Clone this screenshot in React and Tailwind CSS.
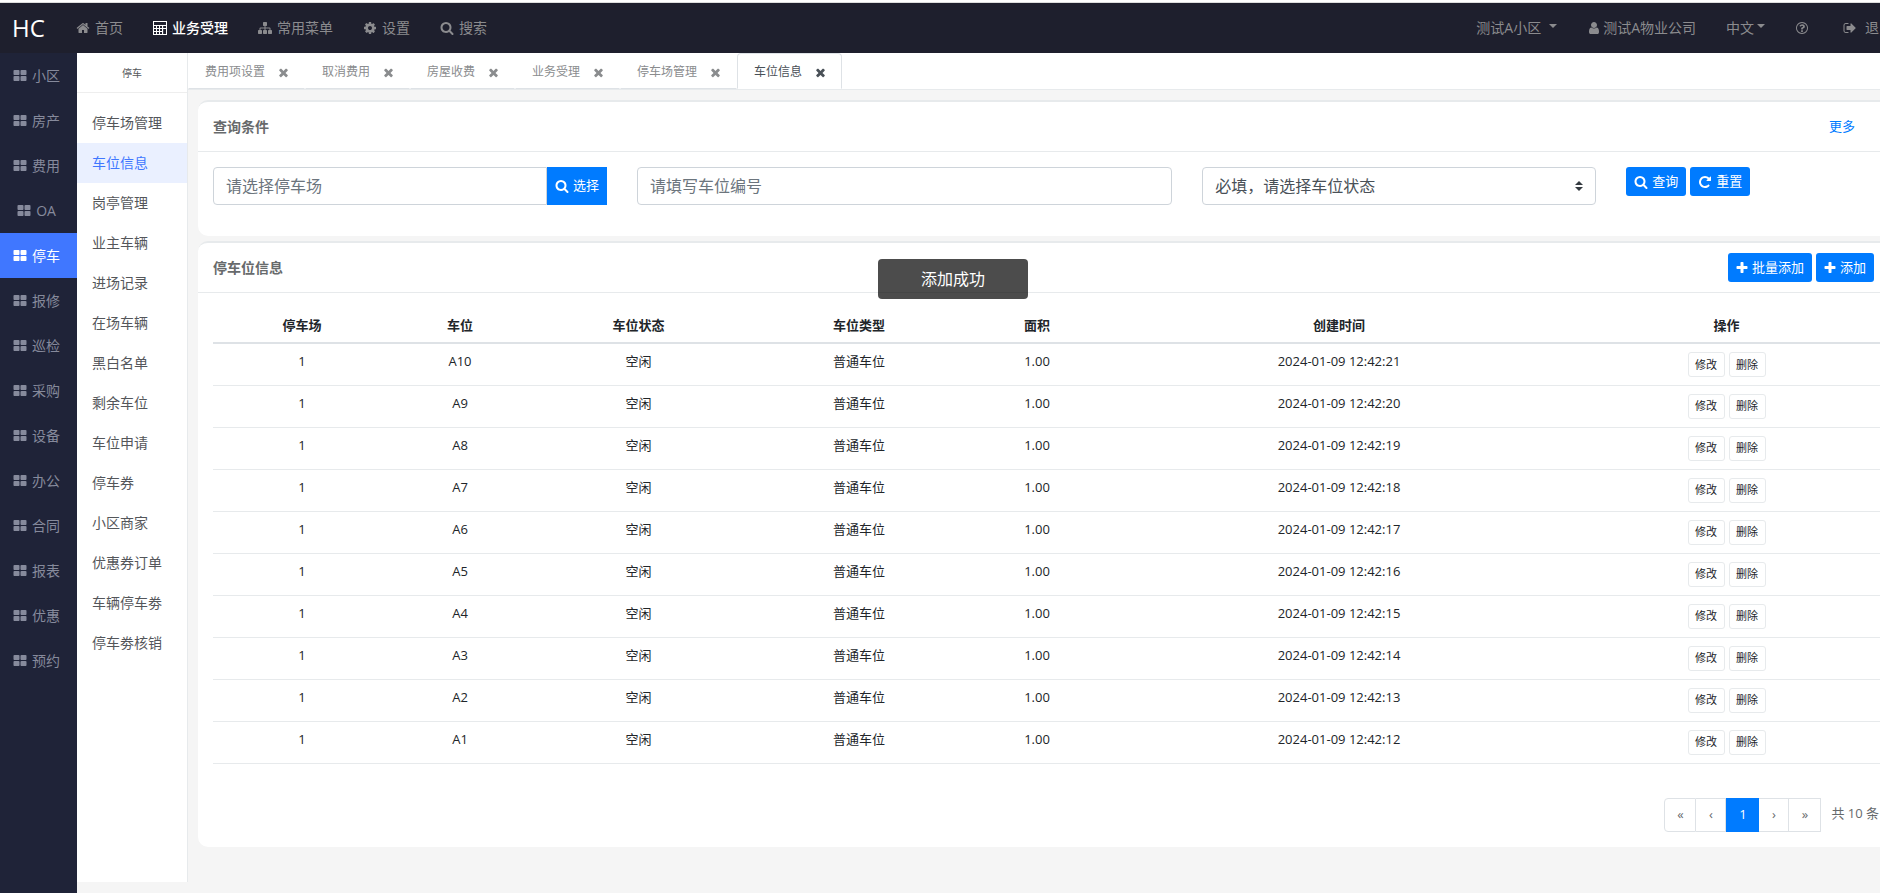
import { useState } from "react";
import clsx from "clsx";

const ICONS = {
    home: "M1472 992v480q0 26-19 45t-45 19h-384v-384h-256v384h-384q-26 0-45-19t-19-45v-480q0-1 .5-3t.5-3l575-474 575 474q1 2 1 6zm223-69l-62 74q-8 9-21 11h-3q-13 0-21-7l-692-577-692 577q-12 8-24 7-13-2-21-11l-62-74q-8-10-7-23.5t11-21.5l719-599q32-26 76-26t76 26l244 204v-195q0-14 9-23t23-9h192q14 0 23 9t9 23v408l219 182q10 8 11 21.5t-7 23.5z",
    calculator: "M0 0h1792v1792h-1792zM130 130v384h1532v-384zM130 640v256h256v-256zM514 640v256h256v-256zM898 640v256h256v-256zM1300 640v256h362v-256zM130 1024v256h256v-256zM514 1024v256h256v-256zM898 1024v256h256v-256zM130 1408v254h256v-254zM514 1408v254h256v-254zM898 1408v254h256v-254zM1300 1024v638h362v-638z",
    sitemap: "M1792 1248v320q0 40-28 68t-68 28h-320q-40 0-68-28t-28-68v-320q0-40 28-68t68-28h96v-192h-512v192h96q40 0 68 28t28 68v320q0 40-28 68t-68 28h-320q-40 0-68-28t-28-68v-320q0-40 28-68t68-28h96v-192h-512v192h96q40 0 68 28t28 68v320q0 40-28 68t-68 28h-320q-40 0-68-28t-28-68v-320q0-40 28-68t68-28h96v-192q0-52 38-90t90-38h512v-192h-96q-40 0-68-28t-28-68v-320q0-40 28-68t68-28h320q40 0 68 28t28 68v320q0 40-28 68t-68 28h-96v192h512q52 0 90 38t38 90v192h96q40 0 68 28t28 68z",
    cog: "M1152 896q0-106-75-181t-181-75-181 75-75 181 75 181 181 75 181-75 75-181zm512-109v222q0 12-8 23t-20 13l-185 28q-19 54-39 91 35 50 107 138 10 12 10 25t-9 23q-27 37-99 108t-94 71q-12 0-26-9l-138-108q-44 23-91 38-16 136-29 186-7 28-36 28h-222q-14 0-24.5-8.5t-11.5-21.5l-28-184q-49-16-90-37l-141 107q-10 9-25 9-14 0-25-11-126-114-165-168-7-10-7-23 0-12 8-23 15-21 51-66.5t54-70.5q-27-50-41-99l-183-27q-13-2-21-12.5t-8-23.5v-222q0-12 8-23t19-13l186-28q14-46 39-92-40-57-107-138-10-12-10-24 0-10 9-23 26-36 98.5-107.5t94.5-71.5q13 0 26 10l138 107q44-23 91-38 16-136 29-186 7-28 36-28h222q14 0 24.5 8.5t11.5 21.5l28 184q49 16 90 37l142-107q9-9 24-9 13 0 25 10 129 119 165 170 7 8 7 22 0 12-8 23-15 21-51 66.5t-54 70.5q26 50 41 98l183 28q13 2 21 12.5t8 23.5z",
    search: "M1216 832q0-185-131.5-316.5t-316.5-131.5-316.5 131.5-131.5 316.5 131.5 316.5 316.5 131.5 316.5-131.5 131.5-316.5zm512 832q0 52-38 90t-90 38q-54 0-90-38l-343-342q-179 124-399 124-143 0-273.5-55.5t-225-150-150-225-55.5-273.5 55.5-273.5 150-225 225-150 273.5-55.5 273.5 55.5 225 150 150 225 55.5 273.5q0 220-124 399l343 343q37 37 37 90z",
    times: "M1490 1322q0 40-28 68l-136 136q-28 28-68 28t-68-28l-294-294-294 294q-28 28-68 28t-68-28l-136-136q-28-28-28-68t28-68l294-294-294-294q-28-28-28-68t28-68l136-136q28-28 68-28t68 28l294 294 294-294q28-28 68-28t68 28l136 136q28 28 28 68t-28 68l-294 294 294 294q28 28 28 68z",
    plus: "M1600 736v192q0 40-28 68t-68 28h-416v416q0 40-28 68t-68 28h-192q-40 0-68-28t-28-68v-416h-416q-40 0-68-28t-28-68v-192q0-40 28-68t68-28h416v-416q0-40 28-68t68-28h192q40 0 68 28t28 68v416h416q40 0 68 28t28 68z",
    repeat: "M1664 256v448q0 26-19 45t-45 19h-448q-42 0-59-40-17-39 14-69l138-138q-148-137-349-137-104 0-198.5 40.5t-163.5 109.5-109.5 163.5-40.5 198.5 40.5 198.5 109.5 163.5 163.5 109.5 198.5 40.5q119 0 225-52t179-147q7-10 23-12 15 0 25 9l137 138q9 8 9.5 20.5t-7.5 22.5q-109 132-264 204.5t-327 72.5q-156 0-298-61t-245-164-164-245-61-298 61-298 164-245 245-164 298-61q147 0 284.5 55.5t244.5 156.5l130-129q29-31 70-14 39 17 39 59z",
    user: "M1536 1399q0 109-62.5 187t-150.5 78h-854q-88 0-150.5-78t-62.5-187q0-85 8.5-160.5t31.5-152 58.5-131 94-89 134.5-34.5q131 128 313 128t313-128q76 0 134.5 34.5t94 89 58.5 131 31.5 152 8.5 160.5zm-256-887q0 159-112.5 271.5t-271.5 112.5-271.5-112.5-112.5-271.5 112.5-271.5 271.5-112.5 271.5 112.5 112.5 271.5z",
    grid: "M832 1024v384q0 52-38 90t-90 38h-512q-52 0-90-38t-38-90v-384q0-52 38-90t90-38h512q52 0 90 38t38 90zm0-768v384q0 52-38 90t-90 38h-512q-52 0-90-38t-38-90v-384q0-52 38-90t90-38h512q52 0 90 38t38 90zm896 768v384q0 52-38 90t-90 38h-512q-52 0-90-38t-38-90v-384q0-52 38-90t90-38h512q52 0 90 38t38 90zm0-768v384q0 52-38 90t-90 38h-512q-52 0-90-38t-38-90v-384q0-52 38-90t90-38h512q52 0 90 38t38 90z",
    help: "M1008 1200v160q0 14-9 23t-23 9h-160q-14 0-23-9t-9-23v-160q0-14 9-23t23-9h160q14 0 23 9t9 23zm256-496q0 50-15 90t-45.5 69-52 44-59.5 36q-32 18-46.5 28t-26 24-11.5 29v32q0 14-9 23t-23 9h-160q-14 0-23-9t-9-23v-68q0-35 10.5-64.5t24-47.5 39-35.5 41-25.5 44.5-21q53-25 75-43t22-49q0-42-43.5-71.5t-95.5-29.5q-56 0-95 27-29 20-80 83-9 12-25 12-11 0-19-6l-108-82q-10-7-12-20t5-23q122-192 349-192 129 0 238.5 89.5t109.5 214.5zm-368-448q-130 0-248.5 51t-204 136.5-136.5 204-51 248.5 51 248.5 136.5 204 204 136.5 248.5 51 248.5-51 204-136.5 136.5-204 51-248.5-51-248.5-136.5-204-204-136.5-248.5-51zm768 640q0 209-103 385.5t-279.5 279.5-385.5 103-385.5-103-279.5-279.5-103-385.5 103-385.5 279.5-279.5 385.5-103 385.5 103 279.5 279.5 103 385.5z",
    signOut: "M704 1440q0 4 1 20t.5 26.5-3 23.5-10 19.5-20.5 6.5h-320q-119 0-203.5-84.5t-84.5-203.5v-704q0-119 84.5-203.5t203.5-84.5h320q13 0 22.5 9.5t9.5 22.5q0 4 1 20t.5 26.5-3 23.5-10 19.5-20.5 6.5h-320q-66 0-113 47t-47 113v704q0 66 47 113t113 47h312l11.5 1 11.5 3 8 5.5 7 9 2 13.5zm928-544q0 26-19 45l-544 544q-19 19-45 19t-45-19-19-45v-288h-448q-26 0-45-19t-19-45v-384q0-26 19-45t45-19h448v-288q0-26 19-45t45-19 45 19l544 544q19 19 19 45z",
};

const navItems = [
    { icon: "home", label: "首页" },
    { icon: "calculator", label: "业务受理", active: true },
    { icon: "sitemap", label: "常用菜单" },
    { icon: "cog", label: "设置" },
    { icon: "search", label: "搜索" },
];

const modules = ["小区", "房产", "费用", "OA", "停车", "报修", "巡检", "采购", "设备", "办公", "合同", "报表", "优惠", "预约"];

const menus = [
    "停车场管理", "车位信息", "岗亭管理", "业主车辆", "进场记录", "在场车辆", "黑白名单",
    "剩余车位", "车位申请", "停车券", "小区商家", "优惠券订单", "车辆停车劵", "停车劵核销",
];

const tabs = ["费用项设置", "取消费用", "房屋收费", "业务受理", "停车场管理", "车位信息"];

const columns = [
    { title: "停车场", width: "w-[178px]" },
    { title: "车位", width: "w-[138px]" },
    { title: "车位状态", width: "w-[219px]" },
    { title: "车位类型", width: "w-[222px]" },
    { title: "面积", width: "w-[134px]" },
    { title: "创建时间", width: "w-[470px]" },
    { title: "操作", width: "pr-1" },
];

const spaces = Array.from({ length: 10 }, (_, i) => ({
    lot: "1",
    num: `A${10 - i}`,
    state: "空闲",
    type: "普通车位",
    area: "1.00",
    createTime: `2024-01-09 12:42:${21 - i}`,
}));

function Icon({ name, className = "size-[14px]" }) {
    return (
        <svg viewBox="0 0 1792 1792" fill="currentColor" fillRule={name === "calculator" ? "evenodd" : undefined} className={clsx("shrink-0", className)} aria-hidden="true">
            <path d={ICONS[name]} />
        </svg>
    );
}

function Caret() {
    return (
        <svg viewBox="0 0 8 4" className="w-2 h-1 -mt-1" fill="currentColor" aria-hidden="true">
            <path d="M0 0h8L4 4z" />
        </svg>
    );
}

function PrimaryButton({ icon, children, className = "h-[29px] rounded-[3px]" }) {
    return (
        <button type="button" className={clsx("flex items-center gap-1 px-2 shrink-0 bg-[#007bff] text-white text-[13px] whitespace-nowrap", className)}>
            <Icon name={icon} className={icon === "plus" ? "size-[14px] -mx-px" : "size-[14px]"} />
            {children}
        </button>
    );
}

function TopNav() {
    return (
        <nav className="flex items-center justify-between h-[50px] bg-[#1e1f2d] text-[#8b8b8e] text-sm whitespace-nowrap">
            <div className="flex items-center">
                <a href="#" className="w-[61px] pl-3 text-2xl text-white">HC</a>
                {navItems.map((item) => (
                    <a key={item.label} href="#" className={clsx("flex items-center gap-[5px] px-[15px]", item.active && "text-white font-medium")}>
                        <Icon name={item.icon} />
                        {item.label}
                    </a>
                ))}
            </div>
            <div className="flex items-center gap-[30px] pr-[13px]">
                <button type="button" className="flex items-center gap-2">测试A小区<Caret /></button>
                <a href="#" className="flex items-center gap-0.5"><Icon name="user" />测试A物业公司</a>
                <button type="button" className="flex items-center gap-[3px]">中文<Caret /></button>
                <button type="button" aria-label="帮助"><Icon name="help" /></button>
                <a href="#" className="flex items-center gap-2 pl-1"><Icon name="signOut" />退出</a>
            </div>
        </nav>
    );
}

function ModuleBar() {
    return (
        <aside className="w-[77px] shrink-0 bg-[#1f2338] text-sm">
            {modules.map((name) => (
                <a
                    key={name}
                    href="#"
                    className={clsx("flex items-center justify-center gap-[5px] h-[45px] pr-1", name === "停车" ? "bg-[#4077ff] text-white" : "text-[#868a9c]")}
                >
                    <Icon name="grid" />
                    {name}
                </a>
            ))}
        </aside>
    );
}

function SubMenu() {
    return (
        <aside className="w-[111px] shrink-0 mb-[11px] bg-white border-r border-[#e7eaec] text-sm text-[#54565a]">
            <div className="flex items-center justify-center h-10 mb-[10px] pt-0.5 border-b border-[#eeeeee] text-[10px]">停车</div>
            {menus.map((name) => (
                <a
                    key={name}
                    href="#"
                    className={clsx("flex items-center h-10 pl-[15px]", name === "车位信息" && "bg-[#eaf0ff] text-[#4077ff]")}
                >
                    {name}
                </a>
            ))}
        </aside>
    );
}

function TabBar() {
    const [active, setActive] = useState("车位信息");

    return (
        <div className="flex h-[37px] bg-white border-b border-[#e7eaec] text-xs">
            {tabs.map((name) => (
                <div
                    key={name}
                    className={clsx(
                        "flex items-center gap-[13px] pt-0.5 pl-4 pr-[15px] border",
                        name === active
                            ? "border-[#dee2e6] border-b-white rounded-t text-[#495057]"
                            : "border-transparent border-b-[#dee2e6] text-[#8a8c8e]"
                    )}
                >
                    <button type="button" onClick={() => setActive(name)}>{name}</button>
                    <button type="button" aria-label={`关闭${name}`}><Icon name="times" className="size-[13px] -mx-px" /></button>
                </div>
            ))}
        </div>
    );
}

function Card({ title, extra, children }) {
    return (
        <section className="bg-white border-t-2 border-[#e7eaec] rounded-[10px]">
            <div className="flex items-center justify-between h-[50px] pl-[15px] pr-6 border-b border-[#e7eaec]">
                <h5 className="text-sm font-semibold text-[#676a6c]">{title}</h5>
                {extra}
            </div>
            {children}
        </section>
    );
}

function SearchCard() {
    return (
        <Card title="查询条件" extra={<a href="#" className="mr-[19px] text-[13px] text-[#007bff]">更多</a>}>
            <div className="grid grid-cols-12 pt-[15px] pb-[31px] pr-1">
                <div className="col-span-3 flex px-[15px]">
                    <input
                        aria-label="停车场"
                        placeholder="请选择停车场"
                        className="flex-1 min-w-0 h-[38px] px-3 border border-[#ced4da] rounded-l text-base placeholder:text-[#6c757d]"
                    />
                    <PrimaryButton icon="search" className="h-[38px]">选择</PrimaryButton>
                </div>
                <div className="col-span-4 px-[15px]">
                    <input
                        aria-label="车位编号"
                        placeholder="请填写车位编号"
                        className="w-full h-[38px] px-3 border border-[#ced4da] rounded text-base placeholder:text-[#6c757d]"
                    />
                </div>
                <div className="col-span-3 relative px-[15px]">
                    <select aria-label="车位状态" className="w-full h-[38px] px-3 appearance-none bg-white border border-[#ced4da] rounded text-base text-[#495057]">
                        <option>必填，请选择车位状态</option>
                        <option>空闲</option>
                        <option>出售</option>
                        <option>出租</option>
                    </select>
                    <svg viewBox="0 0 8 10" className="absolute right-7 top-[14px] w-2 h-[10px] pointer-events-none" fill="#343a40" aria-hidden="true">
                        <path d="M4 0l4 4H0zM0 6h8l-4 4z" />
                    </svg>
                </div>
                <div className="col-span-2 flex gap-1 px-[15px]">
                    <PrimaryButton icon="search">查询</PrimaryButton>
                    <PrimaryButton icon="repeat">重置</PrimaryButton>
                </div>
            </div>
        </Card>
    );
}

function RowButton({ children }) {
    return (
        <button type="button" className="h-[25px] w-[37px] bg-white border border-[#e7eaec] rounded-[3px] text-[11px]">{children}</button>
    );
}

function SpaceTable() {
    return (
        <table className="w-full table-fixed text-center text-[13px] leading-5 text-[#212529]">
            <thead>
                <tr className="h-[35px] border-b-2 border-[#dee2e6]">
                    {columns.map((col) => (
                        <th key={col.title} className={clsx("font-bold", col.width)}>{col.title}</th>
                    ))}
                </tr>
            </thead>
            <tbody>
                {spaces.map((row) => (
                    <tr key={row.num} className="h-[42px] border-b border-[#e7eaec] align-top">
                        <td className="pt-[7px]">{row.lot}</td>
                        <td className="pt-[7px]">{row.num}</td>
                        <td className="pt-[7px]">{row.state}</td>
                        <td className="pt-[7px]">{row.type}</td>
                        <td className="pt-[7px]">{row.area}</td>
                        <td className="pt-[7px]">{row.createTime}</td>
                        <td className="pt-2 pr-1">
                            <div className="flex justify-center gap-1">
                                <RowButton>修改</RowButton>
                                <RowButton>删除</RowButton>
                            </div>
                        </td>
                    </tr>
                ))}
            </tbody>
        </table>
    );
}

function Pagination() {
    const item = "h-[34px] border border-[#dee2e6] text-[#676a6c] bg-white";

    return (
        <div className="flex justify-end gap-[10px] pr-1 text-[13px] text-[#676a6c] whitespace-nowrap">
            <div className="flex">
                <button type="button" className={clsx(item, "w-8 rounded-l")}>«</button>
                <button type="button" className={clsx(item, "w-[30px] border-l-0")}>‹</button>
                <button type="button" className="w-[33px] h-[34px] bg-[#007bff] text-white">1</button>
                <button type="button" className={clsx(item, "w-[30px] border-l-0")}>›</button>
                <button type="button" className={clsx(item, "w-8 border-l-0")}>»</button>
            </div>
            <span className="leading-[30px]">共 10 条</span>
        </div>
    );
}

export default function App() {
    return (
        <div className="min-h-screen overflow-x-hidden bg-[#f5f5f5] font-['Open_Sans','Noto_Sans_CJK_SC',sans-serif]">
            {/* the page runs slightly past the right edge of the window */}
            <div className="relative flex flex-col min-h-screen w-[calc(100%+26px)]">
                <div className="h-[3px] bg-white border-b border-[#dddddd]" />
                <TopNav />
                <div className="flex flex-1">
                    <ModuleBar />
                    <SubMenu />
                    <main className="flex-1 min-w-0">
                        <TabBar />
                        <div className="flex flex-col gap-[5px] pt-[10px] pl-[10px] pr-2">
                            <SearchCard />
                            <Card
                                title="停车位信息"
                                extra={
                                    <div className="flex gap-1">
                                        <PrimaryButton icon="plus">批量添加</PrimaryButton>
                                        <PrimaryButton icon="plus">添加</PrimaryButton>
                                    </div>
                                }
                            >
                                <div className="flex flex-col gap-[34px] p-[15px]">
                                    <SpaceTable />
                                    <Pagination />
                                </div>
                            </Card>
                        </div>
                    </main>
                </div>
                <div role="status" className="absolute top-[259px] left-1/2 -translate-x-1/2 flex items-center justify-center w-[150px] h-10 rounded bg-black/70 text-base text-white">
                    添加成功
                </div>
            </div>
        </div>
    );
}
